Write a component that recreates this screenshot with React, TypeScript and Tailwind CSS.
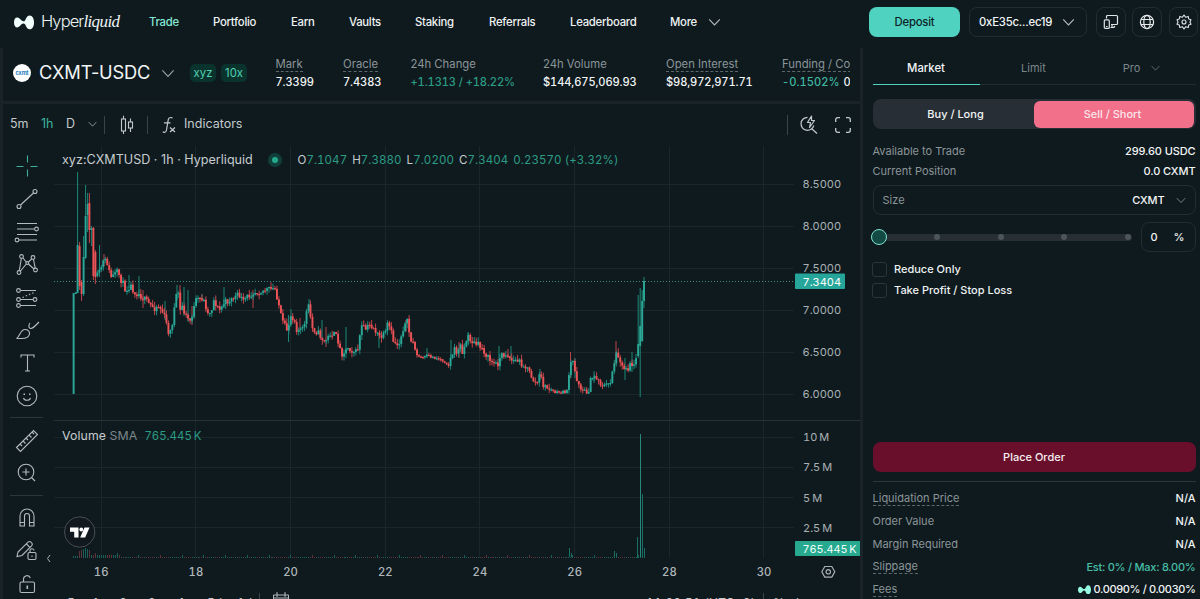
import { useMemo, useState } from 'react'
import type { ReactNode } from 'react'
import clsx from 'clsx'

const NAV = [
  { label: 'Trade', width: 'w-[64px]' },
  { label: 'Portfolio', width: 'w-[78px]' },
  { label: 'Earn', width: 'w-[58px]' },
  { label: 'Vaults', width: 'w-[66px]' },
  { label: 'Staking', width: 'w-[74px]' },
  { label: 'Referrals', width: 'w-[81px]' },
  { label: 'Leaderboard', width: 'w-[100px]' },
  { label: 'More', width: 'w-[38px]' },
]

const STATS = [
  { label: 'Mark', value: '7.3399', dotted: true, width: 'w-[67.5px]' },
  { label: 'Oracle', value: '7.4383', dotted: true, width: 'w-[67.5px]' },
  { label: '24h Change', value: '+1.1313 / +18.22%', tone: 'text-[#2c9c84]', width: 'w-[132.5px]' },
  { label: '24h Volume', value: '$144,675,069.93', width: 'w-[123px]' },
  { label: 'Open Interest', value: '$98,972,971.71', dotted: true, width: 'w-[116px]' },
]

const PRICES = [8.5, 8, 7.5, 7, 6.5, 6]
const VOLUMES = [
  { label: '10\u2009M', y: 437 },
  { label: '7.5\u2009M', y: 467 },
  { label: '5\u2009M', y: 497.5 },
  { label: '2.5\u2009M', y: 527.5 },
]
const DAYS = [16, 18, 20, 22, 24, 26, 28, 30]

// close prices along the time axis, in chart units
const PATH: [number, number][] = [
  [96, 274], [98, 277], [100, 271], [103, 262], [106, 261], [108, 264], [110, 277], [113, 276], [118, 272], [122, 282],
  [126, 290], [130, 285], [135, 292], [139, 294], [143, 298], [150, 305], [155, 308], [158, 305], [162, 311], [165, 318],
  [168, 331], [171, 332], [173, 318], [175, 304], [178, 289], [180, 312], [182, 305], [185, 315], [190, 321], [193, 312],
  [196, 301], [202, 298], [205, 303], [208, 314], [212, 308], [213, 299], [216, 304], [219, 311], [224, 303], [230, 300],
  [235, 297], [240, 295], [243, 303], [246, 298], [253, 292], [260, 291], [266, 290], [275, 289], [278, 300], [282, 322],
  [287, 330], [291, 315], [294, 318], [297, 330], [303, 330], [307, 310], [309, 306], [312, 328], [316, 331], [320, 335],
  [324, 342], [328, 338], [330, 333], [335, 335], [338, 340], [341, 354], [346, 350], [348, 347], [352, 350], [357, 353],
  [360, 335], [362, 326], [365, 330], [370, 325], [374, 328], [378, 336], [382, 337], [385, 335], [388, 323], [391, 332],
  [394, 343], [399, 344], [403, 328], [408, 321], [410, 340], [414, 344], [417, 356], [422, 358], [428, 356], [432, 357],
  [440, 359], [446, 362], [449, 366], [451, 357], [454, 350], [458, 352], [460, 345], [463, 352], [467, 338], [469, 337],
  [473, 343], [478, 345], [483, 349], [488, 358], [493, 363], [497, 365], [501, 356], [507, 353], [511, 360], [518, 361],
  [523, 364], [528, 370], [535, 383], [538, 382], [540, 374], [544, 387], [550, 389], [556, 393], [566, 392], [568, 385],
  [571, 363], [573, 362], [576, 377], [580, 386], [584, 392], [588, 393], [590, 382], [595, 375], [600, 383], [605, 386],
  [610, 383], [613, 367], [616, 355], [619, 354], [622, 367], [628, 368], [630, 362], [634, 367], [636, 356],
]

const SPIKES: [number, number, number][] = [
  [99.5, 245, 277], [104, 254, 266], [129, 275, 288], [139, 276, 294], [143, 290, 308], [165, 301, 320], [177, 285, 300],
  [180, 285, 308], [184, 287, 316], [188, 290, 322], [192, 306, 325], [202, 294, 300], [224, 287, 308], [253, 290, 308],
  [288.5, 315, 342], [291, 309, 320], [300, 318, 330], [309, 299, 312], [322, 320, 338], [326, 327, 347], [346, 327, 353],
  [379, 334, 348], [406, 320, 332], [427, 348, 358], [451, 340, 358], [459, 342, 358], [468, 332, 344], [499, 346, 364],
  [508, 349, 358], [511, 346, 360], [540, 369, 380], [570.5, 352, 378], [575, 358, 378], [594, 371, 383], [616, 341, 365],
  [625, 358, 380], [632, 352, 372],
]

interface Candle {
  x: number
  open: number
  close: number
  high: number
  low: number
}

function buildCandles(): Candle[] {
  let seed = 11
  const rand = () => {
    seed = (seed * 16807) % 2147483647
    return seed / 2147483647
  }
  const at = (x: number) => {
    const i = PATH.findIndex((p) => p[0] >= x)
    if (i <= 0) return PATH[i === 0 ? 0 : PATH.length - 1][1]
    const [x0, y0] = PATH[i - 1]
    const [x1, y1] = PATH[i]
    return y0 + ((y1 - y0) * (x - x0)) / (x1 - x0)
  }
  const list: Candle[] = [
    { x: 73.6, open: 394, close: 293, high: 293, low: 394 },
    { x: 75.8, open: 294, close: 292.5, high: 292, low: 294 },
    { x: 77.6, open: 293, close: 245, high: 172, low: 293 },
    { x: 79.6, open: 246, close: 286, high: 242, low: 290 },
    { x: 81.6, open: 282, close: 294, high: 280, low: 301 },
    { x: 83.6, open: 294, close: 257, high: 236, low: 296 },
    { x: 85.6, open: 258, close: 216, high: 185, low: 259 },
    { x: 87.6, open: 215, close: 204, high: 193, low: 232 },
    { x: 89.4, open: 203, close: 230, high: 193, low: 243 },
    { x: 91.4, open: 230, close: 228, high: 226, low: 246 },
    { x: 93.4, open: 228, close: 276, high: 227, low: 280 },
    { x: 95.4, open: 252, close: 277, high: 250, low: 284 },
  ]
  let prev = 276
  for (let x = 97.4; x < 637.5; x += 1.973) {
    const calm = (x > 415 && x < 450) || (x > 550 && x < 566) ? 0.5 : 1
    const close = Math.min(393.5, at(x) + (rand() - 0.5) * 7 * calm)
    list.push({
      x,
      open: prev,
      close,
      high: Math.min(prev, close) - rand() * 5 * calm,
      low: Math.min(394, Math.max(prev, close) + rand() * 5 * calm),
    })
    prev = close
  }
  list.push(
    { x: 638.2, open: 356, close: 344, high: 295, low: 358 },
    { x: 640.2, open: 346, close: 326, high: 288, low: 397 },
    { x: 642.2, open: 341, close: 301, high: 290, low: 342 },
    { x: 644, open: 301, close: 281, high: 277, low: 308 },
  )
  return list
}

function Chevron({ w = 12, className }: { w?: number; className?: string }) {
  return (
    <svg width={w} height={w / 2 + 2} viewBox="0 0 12 8" fill="none" className={className}>
      <path d="M1 1.2l5 5.3 5-5.3" stroke="currentColor" strokeWidth="1" />
    </svg>
  )
}

function Blob({ w, className }: { w: number; className?: string }) {
  return (
    <svg width={w} height={w * 0.75} viewBox="0 0 20 15" className={className}>
      <path
        d="M3.2 2.5C1.2 2.5 0 4.5 0 7.4s1.2 5 3.2 5c1.8 0 3-1.8 4.500-3.300 1-.9 2.500-.9 3.300.2 1.300 2 2 5 4.600 5C18.500 14.300 20 11.200 20 7.400S18.500.5 15.600.5c-2.600 0-3.300 3-4.600 4.900-.8 1.100-2.300 1.100-3.300.2C6.200 4.200 5 2.500 3.200 2.500z"
        fill="currentColor"
      />
    </svg>
  )
}

function ToolIcon({ h = 'h-[33px]', children, className }: { h?: string; children: ReactNode; className?: string }) {
  return (
    <div className={clsx('flex w-full shrink-0 items-center justify-center', h, className)}>
      <svg width="28" height="28" viewBox="0 0 28 28" fill="none" stroke="currentColor" strokeWidth="1.1" className="shrink-0">
        {children}
      </svg>
    </div>
  )
}

function Header() {
  return (
    <header className="flex h-12 shrink-0 items-center pb-1 pl-3.5 pr-0.5">
      <Blob w={20} className="shrink-0 text-[#f0fffb]" />
      <div className="ml-[7px] w-[100px] text-[16.5px] font-light tracking-[-0.9px] text-[#eef5f4]">
        Hyper<span className="font-['Liberation_Serif'] text-[17px] italic tracking-[-0.6px]">liquid</span>
      </div>
      <nav className="ml-2 flex items-center pt-px text-[11.3px] font-medium tracking-[-0.25px] text-[#eef2f2]">
        {NAV.map((item, i) => (
          <a key={item.label} className={clsx('whitespace-nowrap', item.width, i === 0 && 'text-[#86e8d4]')}>
            {item.label}
          </a>
        ))}
        <Chevron w={13} className="text-[#b6bdbf]" />
      </nav>
      <div className="ml-auto flex items-center text-[11.3px] font-medium tracking-[-0.2px]">
        <button className="h-[30px] w-[91px] rounded-lg bg-[#50d2c1] pt-[1px] text-[#0c2426]">Deposit</button>
        <button className="ml-[9px] flex h-[30px] w-[118px] items-center justify-between rounded-lg border border-[#222c31] pl-[9px] pr-[11px] pt-[1px] text-[#f3f6f6]">
          0xE35c...ec19
          <Chevron w={13} className="text-[#b6bdbf]" />
        </button>
        <button className="ml-[9px] flex h-[30px] w-[30px] items-center justify-center rounded-lg border border-[#222c31] text-[#dfe4e4]">
          <svg width="16" height="16" viewBox="0 0 16 16" fill="none" stroke="currentColor" strokeWidth="1.2">
            <path d="M3.5 4.5V2.5a1 1 0 0 1 1-1h9a1 1 0 0 1 1 1v7a1 1 0 0 1-1 1H8M9 10.5v2.5M7.5 13.5h4" />
            <rect x="1.3" y="5.8" width="5" height="8.6" rx="1" />
            <path d="M3 12.5h1.6M10.5 13.3l1.5-1" />
          </svg>
        </button>
        <button className="ml-[6px] flex h-[30px] w-[30px] items-center justify-center rounded-lg border border-[#222c31] text-[#e6eaea]">
          <svg width="16" height="16" viewBox="0 0 16 16" fill="none" stroke="currentColor" strokeWidth="1.2">
            <circle cx="8" cy="8" r="6.6" />
            <ellipse cx="8" cy="8" rx="3.2" ry="6.6" />
            <path d="M2 5.5h12M2 10.5h12" />
          </svg>
        </button>
        <button className="ml-[7px] flex h-[30px] w-[29px] items-center justify-center rounded-lg border border-[#222c31] text-[#dfe4e4]">
          <svg width="16" height="16" viewBox="0 0 16 16" fill="none" stroke="currentColor" strokeWidth="1.1" strokeLinejoin="round">
            <circle cx="8" cy="8" r="2" />
            <path d="M8 1l1.7 2.3 2.5-.9.5 2.6 2.3.8-1 2.2 1 2.2-2.3.8-.5 2.6-2.5-.9L8 15l-1.7-2.3-2.5.9-.5-2.6-2.3-.8 1-2.200-1-2.200 2.300-.8.5-2.600 2.500.9z" />
          </svg>
        </button>
      </div>
    </header>
  )
}

function SymbolBar() {
  return (
    <div className="flex h-[53px] shrink-0 items-center overflow-hidden pb-[3px] pl-2.5 pr-[10px]">
      <div className="flex h-[18px] w-[18px] shrink-0 items-center justify-center rounded-full bg-white text-[5.5px] font-bold tracking-[-0.1px] text-[#2a7fc4]">
        cxmt
      </div>
      <div className="ml-[8px] w-[112px] shrink-0 whitespace-nowrap text-[18.3px] tracking-[-0.2px] text-[#f2f5f5]">CXMT-USDC</div>
      <Chevron w={14} className="ml-[10px] shrink-0 text-[#9aa3a6]" />
      <div className="ml-[15px] flex shrink-0 gap-[5px] text-[11.3px] leading-[18px] text-[#50d2b4]">
        <span className="w-[26px] rounded-[5px] bg-[#0b332d] text-center">xyz</span>
        <span className="w-[26px] rounded-[5px] bg-[#0b332d] text-center">10x</span>
      </div>
      <div className="ml-[28.5px] flex min-w-0 flex-1 overflow-hidden whitespace-nowrap text-[11.3px]">
        {STATS.map((s) => (
          <div key={s.label} className={clsx('shrink-0', s.width)}>
            <div className="h-[18px] leading-[15px] text-[#8b9598]">
              <span className={clsx(s.dotted && 'border-b border-dashed border-[#5d686c]')}>{s.label}</span>
            </div>
            <div className={clsx('text-[11.1px] font-medium leading-[14px] tabular-nums tracking-[-0.1px]', s.tone ?? 'text-[#f2f5f5]')}>
              {s.value}
            </div>
          </div>
        ))}
        <div className="shrink-0">
          <div className="h-[18px] leading-[15px] text-[#8b9598]">
            <span className="border-b border-dashed border-[#5d686c]">Funding / Countdown</span>
          </div>
          <div className="flex text-[11.1px] font-medium leading-[14px] tabular-nums text-[#f2f5f5]">
            <span className="w-[61.5px] tracking-[0.05px] text-[#3fb99f]">-0.1502%</span>00:38:09
          </div>
        </div>
      </div>
    </div>
  )
}

function ChartToolbar() {
  return (
    <div className="flex h-[40px] shrink-0 items-center pl-[7px] pr-[9px] pt-[1px] text-[12.5px] text-[#c3c9cb]">
      <span className="w-[31px]">5m</span>
      <span className="w-[25px] text-[#3cb49c]">1h</span>
      <span className="w-[22px]">D</span>
      <Chevron w={9} className="text-[#b6bdbf]" />
      <div className="ml-[7px] h-[18px] w-px bg-[#3a4347]" />
      <svg width="16" height="20" viewBox="0 0 16 20" fill="none" stroke="#c3c9cb" strokeWidth="1.1" className="ml-[14px]">
        <rect x="2.5" y="4" width="4" height="12" />
        <path d="M4.5 4V.8M4.5 16v3M11.5 7V3.5M11.5 13v4" />
        <rect x="9.5" y="7" width="4" height="6" />
      </svg>
      <div className="ml-[12px] h-[18px] w-px bg-[#3a4347]" />
      <svg width="14" height="18" viewBox="0 0 14 18" fill="none" stroke="#c3c9cb" strokeWidth="1.2" className="ml-[14px]">
        <path d="M10.5 2.3C9.8 1.2 7 .9 6.3 3.5L4.5 14c-.4 2.5-2.5 2.8-3.7 1.800M2 6.800h6.500M8 11.500l5 4.500M13 11.500L8 16" />
      </svg>
      <span className="ml-[8px] text-[12.5px]">Indicators</span>
      <div className="ml-auto h-[20px] w-px bg-[#3a4347]" />
      <svg width="20" height="20" viewBox="0 0 20 20" fill="none" stroke="#c3c9cb" strokeWidth="1.2" className="ml-[11px]">
        <path d="M8.5 2.3a6.5 6.5 0 1 0 6.3 8.2M13 14l5 4.5" />
        <path d="M12.5 1L8.5 7.5h3L10.5 12.5l5-7h-3z" strokeLinejoin="round" />
      </svg>
      <svg width="16" height="16" viewBox="0 0 16 16" fill="none" stroke="#c3c9cb" strokeWidth="1.3" className="ml-[16px]">
        <path d="M.7 5V2.7a2 2 0 0 1 2-2H5M11 .7h2.3a2 2 0 0 1 2 2V5M15.3 11v2.3a2 2 0 0 1-2 2H11M5 15.3H2.7a2 2 0 0 1-2-2V11" />
      </svg>
    </div>
  )
}

function DrawingTools() {
  return (
    <div className="flex w-[47px] shrink-0 flex-col items-center overflow-hidden pt-[5px] text-[#b4bbbe]">
      <ToolIcon className="text-[#3fae9b]">
        <path d="M3.5 14.5h7M17.5 14.5h7M14.5 3.5v7M14.5 17.5v7" />
      </ToolIcon>
      <ToolIcon>
        <circle cx="6" cy="21.5" r="2" />
        <circle cx="22" cy="6.5" r="2" />
        <path d="M7.5 20l13-12" />
      </ToolIcon>
      <ToolIcon>
        <path d="M4 5.5h20M4 11h17.5M4 16.5h20M6 22h18" />
        <circle cx="23.5" cy="11" r="1.9" />
        <circle cx="4" cy="22" r="1.9" />
      </ToolIcon>
      <ToolIcon>
        <circle cx="8.5" cy="5.5" r="1.9" />
        <circle cx="20" cy="6.5" r="1.9" />
        <circle cx="6" cy="21.5" r="1.9" />
        <circle cx="22.5" cy="19" r="1.9" />
        <circle cx="14.3" cy="12" r="1.4" />
        <path d="M8.3 7.5L6.3 19.6M10 7l3.2 4M7.5 20l5.8-7M15.5 11l3.2-3.2M20.5 8.5l1.7 8.7M15.4 13l5.6 5" />
      </ToolIcon>
      <ToolIcon>
        <circle cx="5.5" cy="6.5" r="1.9" />
        <circle cx="5.5" cy="15.5" r="1.9" />
        <circle cx="22" cy="15.5" r="1.9" />
        <circle cx="5.5" cy="21.5" r="1.9" />
        <path d="M7.5 6.5H23M7.5 15.5h12.5M7.5 21.5H23" />
        <path d="M9.5 13.5L22 8" strokeDasharray="1.5 2" />
      </ToolIcon>
      <ToolIcon>
        <path d="M3.5 21.5c3.5-1.5 3.5-9 8.5-9 3 0 5 2 4.5 4.5-.6 3.5-4.5 4.5-8 4.5z" />
        <path d="M17 6c-1.5 2-1.5 4.5 0 5.3 2 1 4-1 9-6.3" />
      </ToolIcon>
      <ToolIcon h="h-[32px]">
        <path d="M8 8.5v-2.5h13v2.5M14.500 6v16M12 22h5" />
      </ToolIcon>
      <ToolIcon>
        <circle cx="14" cy="14" r="9.8" />
        <path d="M10.5 16c1 3 6 3 7 0" />
        <path d="M10.5 12.3h1.5M16 12.3h1.5" strokeWidth="1.6" />
      </ToolIcon>
      <div className="mt-[5px] h-px w-[33px] shrink-0 bg-[#2c363a]" />
      <ToolIcon className="mt-[6px]">
        <path d="M3.5 20.5L20.5 3.5l4 4L7.5 24.5zM7 17l2 2M10 14l2.5 2.5M13 11l2 2M16 8l2.5 2.5M19 5l2 2" />
      </ToolIcon>
      <ToolIcon h="h-[32px]">
        <circle cx="13" cy="13" r="7.8" />
        <path d="M13 9.5v7M9.5 13h7M18.5 18.5l3.5 3.5" />
      </ToolIcon>
      <div className="mt-[6px] h-px w-[33px] shrink-0 bg-[#2c363a]" />
      <ToolIcon className="mt-[5px]">
        <path d="M7 22V12a7 7 0 0 1 14 0v10h-4.5V12a2.5 2.5 0 0 0-5 0v10zM7 18.5h4.5M16.5 18.5H21" />
      </ToolIcon>
      <ToolIcon>
        <path d="M4 19.5l1-4.5L15 5.2a2 2 0 0 1 3 0l.6.6a2 2 0 0 1 0 3L9 18.5zM13.5 7l3.3 3.3" />
        <rect x="15" y="15.5" width="8" height="7" rx="1.2" />
        <path d="M17 15.5v-1.5a2 2 0 0 1 4-.5M19 18.5v1.5" />
      </ToolIcon>
      <ToolIcon>
        <rect x="7" y="12" width="14.5" height="10.5" rx="1.5" />
        <path d="M10.5 12V9a3.5 3.5 0 0 1 6.8-1" />
        <path d="M14.3 15.5v3.5" strokeWidth="1.6" />
      </ToolIcon>
    </div>
  )
}

function PriceChart() {
  const candles = useMemo(buildCandles, [])

  return (
    <svg width="810" height="455" viewBox="50 144 810 455" className="shrink-0 font-['Inter',sans-serif] tabular-nums">
      {/* Grid */}
      <g stroke="#1b262b" strokeWidth="1" shapeRendering="crispEdges">
        {DAYS.map((d, i) => (
          <line key={d} x1={101 + i * 94.7} x2={101 + i * 94.7} y1="146" y2="558" />
        ))}
        {PRICES.map((p) => (
          <line key={p} x1="54" x2="794" y1={184.5 + (8.5 - p) * 84} y2={184.5 + (8.5 - p) * 84} />
        ))}
        {VOLUMES.map((v) => (
          <line key={v.label} x1="54" x2="794" y1={v.y} y2={v.y} />
        ))}
        <line x1="54" x2="860" y1="420.5" y2="420.5" stroke="#273136" />
      </g>

      {/* Volume bars */}
      <g shapeRendering="crispEdges">
        {candles.map((c, i) => {
          const up = c.close < c.open
          const h = i < 3 ? 2 : i < 9 ? 10 - Math.abs(6 - i) : 1 + ((i * 7) % 11 === 0 ? 2 : 0) + (i < 24 ? 2 : 0)
          return <rect key={i} x={c.x - 0.5} y={557.5 - h} width="1" height={h} fill={up ? '#1a5f58' : '#5f3337'} />
        })}
        <path d="M569 548v9M571 553v4" stroke="#1a6f65" />
        <path d="M614 551v6M616 553v4M637.5 537v20.5M642.5 494v63.5M644.5 548v9" stroke="#1a6f65" />
        <path d="M640 434v123" stroke="#26897c" />
      </g>

      {/* Last price */}
      <line x1="54" x2="795" y1="281.5" y2="281.5" stroke="#3c8f86" strokeDasharray="1 2" />

      {/* Candles */}
      {SPIKES.map(([x, top, bottom], i) => (
        <line key={i} x1={x} x2={x} y1={top} y2={bottom} stroke={i % 3 === 1 ? '#b8434a' : '#1c8778'} />
      ))}
      {candles.map((c, i) => {
        const up = c.close < c.open
        return (
          <g key={i}>
            <line x1={c.x} x2={c.x} y1={c.high} y2={c.low} stroke={up ? '#1c8778' : '#c24349'} strokeWidth="1" />
            <rect
              x={c.x - 0.95}
              y={Math.min(c.open, c.close)}
              width="1.9"
              height={Math.max(1.2, Math.abs(c.open - c.close))}
              fill={up ? '#2ba897' : '#ee5457'}
            />
          </g>
        )
      })}

      {/* Price axis */}
      <g fontSize="11" fill="#a9b1b4">
        {PRICES.map((p) => (
          <text key={p} x="802.5" y={188 + (8.5 - p) * 84}>
            {p.toFixed(4)}
          </text>
        ))}
        {VOLUMES.map((v) => (
          <text key={v.label} x="803" y={v.y + 4}>
            {v.label}
          </text>
        ))}
      </g>
      <rect x="795" y="273.5" width="50" height="15.5" rx="1" fill="#26a69a" />
      <text x="802.5" y="285.5" fontSize="11" fill="#fff">
        7.3404
      </text>
      <rect x="795" y="541" width="66" height="15" rx="1" fill="#26a98f" />
      <text x="802.5" y="552.5" fontSize="10.8" fill="#f2fffc">
        {'765.445\u2009K'}
      </text>

      {/* Time axis */}
      <g fontSize="11.3" fontWeight="500" letterSpacing="0.1" fill="#b0b7ba" textAnchor="middle">
        {DAYS.map((d, i) => (
          <text key={d} x={101.2 + i * 94.7} y="576">
            {d}
          </text>
        ))}
      </g>
      <g fill="none" stroke="#aab1b4" strokeWidth="1.2">
        <path d="M821.8 571.8l3-5.3h7l3 5.3-3 5.3h-7z" />
        <circle cx="828.3" cy="571.8" r="2.2" />
      </g>

      {/* TradingView badge */}
      <circle cx="79.7" cy="532" r="15.2" fill="#11191e" stroke="#474e54" />
      <g fill="#fff">
        <path d="M70 527.5h8.5v10h-4.3v-5.8H70z" />
        <circle cx="81.3" cy="529.5" r="1.9" />
        <path d="M84.5 527.5h5l-4.3 10h-5z" />
      </g>

      {/* Range bar, cut by the window's bottom edge */}
      <g fontSize="12" fill="#c3c9cb">
        <text x="67" y="607">5y</text>
        <text x="92" y="607">1y</text>
        <text x="119" y="607">6m</text>
        <text x="148" y="607">3m</text>
        <text x="178" y="607">1m</text>
        <text x="207" y="607">5d</text>
        <text x="237" y="607">1d</text>
        <text x="646" y="606.5" letterSpacing="0.2">11:28:51 (UTC+2)</text>
        <text x="773" y="606.5">%</text>
        <text x="796" y="607">log</text>
        <text x="825" y="608">auto</text>
      </g>
      <path d="M259.5 593v6M763.5 593v6" stroke="#3a4347" />
      <path d="M273.5 600v-5h15v5M277 592v5M285 592v5M273.5 598h15" fill="none" stroke="#b4bbbe" />
    </svg>
  )
}

interface RowProps {
  label: string
  value: ReactNode
  dotted?: boolean
  h: string
  valueClass?: string
}

function Row({ label, value, dotted, h, valueClass }: RowProps) {
  return (
    <div className={clsx('flex items-center justify-between', h)}>
      <span className={clsx('text-[#8b9598]', dotted && 'border-b border-dashed border-[#5d686c] leading-[14px]')}>{label}</span>
      <span className={clsx('flex items-center font-medium', valueClass ?? 'text-[#f2f5f5]')}>{value}</span>
    </div>
  )
}

function OrderPanel() {
  const [side, setSide] = useState<'buy' | 'sell'>('sell')

  return (
    <aside className="flex min-w-0 flex-1 flex-col pl-[9.5px] pr-[4.5px] text-[11px]">
      <div className="flex h-[37px] shrink-0 border-b border-[#222c31]">
        <div className="-mb-px flex w-[107px] items-center justify-center border-b border-[#50d2c1] pt-[5px] text-[11.3px] font-medium text-[#f2f5f5]">
          Market
        </div>
        <div className="flex w-[108px] items-center justify-center pt-[5px] text-[#7b868a]">Limit</div>
        <div className="flex flex-1 items-center justify-center gap-[11px] pt-[5px] text-[#7b868a]">
          Pro
          <Chevron w={9} />
        </div>
      </div>

      <div className="mt-[14px] flex h-[30px] shrink-0 rounded-lg bg-[#272e35] p-[1.5px] font-medium text-[#f2f5f5]">
        <button
          onClick={() => setSide('buy')}
          className={clsx('flex-1 rounded-md pl-[3px] pt-px', side === 'buy' && 'bg-[#50d2c1] text-[#0c2426]')}
        >
          Buy / Long
        </button>
        <button
          onClick={() => setSide('sell')}
          className={clsx('flex-1 rounded-md pr-[3px] pt-px', side === 'sell' && 'bg-[#f2708a] text-[#fbe6ea]')}
        >
          Sell / Short
        </button>
      </div>

      <div className="mt-[12px]">
        <Row h="h-5" label="Available to Trade" value="299.60 USDC" valueClass="tracking-[-0.1px] text-[#f2f5f5]" />
        <Row h="h-5" label="Current Position" value="0.0 CXMT" valueClass="tracking-[-0.1px] text-[#f2f5f5]" />
      </div>

      <div className="mt-[4px] flex h-[30px] shrink-0 items-center rounded-lg border border-[#222c31] px-[9px] pt-[1px] text-[#8b9598]">
        Size
        <span className="ml-auto mr-[11px] font-medium tracking-[-0.15px] text-[#f2f5f5]">CXMT</span>
        <Chevron w={10} />
      </div>

      <div className="mt-[7px] flex h-[30px] shrink-0 items-center justify-between">
        <div className="-ml-[1.5px] flex h-[7px] w-[261px] items-center rounded-full bg-[#272f34] pr-[1px]">
          <div className="h-[16px] w-[16px] shrink-0 rounded-full border-[1.5px] border-[#7fe3cf] bg-[#134a43]" />
          <div className="ml-[47px] flex flex-1 justify-between">
            {[25, 50, 75, 100].map((p) => (
              <span key={p} className="h-[6px] w-[6px] rounded-full bg-[#4c565b]" />
            ))}
          </div>
        </div>
        <div className="flex h-[30px] w-[55px] items-center justify-between rounded-lg border border-[#222c31] pl-[9px] pr-[10px] pt-[1px] font-medium text-[#f2f5f5]">
          <span>0</span>
          <span>%</span>
        </div>
      </div>

      <div className="-ml-[0.5px] mt-[7px] flex flex-col font-medium text-[#eef2f2]">
        {['Reduce Only', 'Take Profit / Stop Loss'].map((label) => (
          <label key={label} className="flex h-[21px] items-center gap-[7px]">
            <span className="h-[15px] w-[15px] rounded-[3px] border border-[#2a3439]" />
            <span className="leading-[15px]">{label}</span>
          </label>
        ))}
      </div>

      <button className="mt-[141px] h-[30px] shrink-0 rounded-lg bg-[#690f2c] pt-[1px] font-medium text-[#f6eef0]">Place Order</button>
      <div className="mt-[9px] h-px shrink-0 bg-[#2c353a]" />
      <div className="mt-[5px]">
        <Row h="h-[22.8px]" label="Liquidation Price" value="N/A" dotted />
        <Row h="h-[22.8px]" label="Order Value" value="N/A" />
        <Row h="h-[22.8px]" label="Margin Required" value="N/A" />
        <Row h="h-[22.8px]" label="Slippage" value="Est: 0% / Max: 8.00%" dotted valueClass="tracking-[-0.25px] text-[#46bfa6]" />
        <Row
          h="h-[22.8px]"
          label="Fees"
          dotted
          valueClass="tracking-[-0.35px] text-[#f2f5f5]"
          value={
            <>
              <Blob w={13} className="mr-[3px] text-[#97fce4]" />
              0.0090% / 0.0030%
            </>
          }
        />
      </div>
    </aside>
  )
}

export default function App() {
  return (
    <div className="flex h-[599px] w-[1200px] flex-col overflow-hidden bg-[#0f1a1f] font-['Inter',sans-serif]">
      <Header />
      <div className="flex min-h-0 flex-1">
        <main className="flex w-[863px] shrink-0 flex-col border-x-[3px] border-[#192328]">
          <SymbolBar />
          <div className="h-[3px] shrink-0 bg-[#192328]" />
          <ChartToolbar />
          <div className="relative flex min-h-0 flex-1">
            <DrawingTools />
            <PriceChart />
            <svg width="5" height="9" viewBox="0 0 5 9" fill="none" stroke="#aab1b4" className="absolute left-[43px] top-[410px]">
              <path d="M4 1L1.5 4.5 4 8" />
            </svg>
            <div className="absolute left-[59px] top-[7px] flex items-center whitespace-nowrap text-[12.6px] leading-[18px] text-[#c6ccce]">
              <span className="w-[206px]">xyz:CXMTUSD · 1h · Hyperliquid</span>
              <span className="flex h-[14px] w-[14px] items-center justify-center rounded-full bg-[#11403a]">
                <span className="h-[6px] w-[6px] rounded-full bg-[#26a98f]" />
              </span>
              <span className="ml-[15.5px] flex gap-[5px] text-[11.5px] tabular-nums tracking-[0.07px] text-[#2c9c84]">
                <span><span className="text-[#c6ccce]">O</span>7.1047</span>
                <span><span className="text-[#c6ccce]">H</span>7.3880</span>
                <span><span className="text-[#c6ccce]">L</span>7.0200</span>
                <span><span className="text-[#c6ccce]">C</span>7.3404</span>
                <span>0.23570 (+3.32%)</span>
              </span>
            </div>
            <div className="absolute left-[59px] top-[283px] text-[12.3px] leading-[18px] tracking-[0.1px] text-[#c6ccce]">
              Volume <span className="text-[#7b868a]">SMA</span>
              <span className="ml-[7px] text-[11.4px] tabular-nums tracking-normal text-[#2c9c84]">{'765.445\u2009K'}</span>
            </div>
          </div>
        </main>
        <OrderPanel />
      </div>
    </div>
  )
}
